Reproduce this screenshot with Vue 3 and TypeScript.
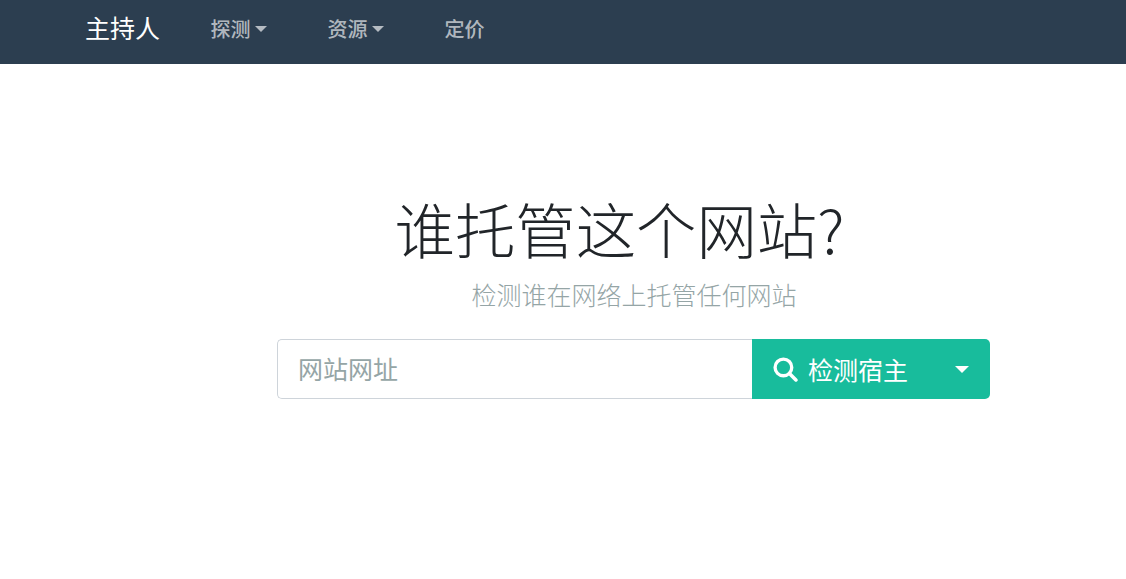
<script setup lang="ts">
const links = [
  { label: '探测', caret: true },
  { label: '资源', caret: true },
  { label: '定价', caret: false },
]
</script>

<template>
  <div class="page">
    <nav class="navbar">
      <a class="brand">主持人</a>
      <ul class="nav">
        <li v-for="l in links" :key="l.label" class="nav-item">
          <span>{{ l.label }}</span>
          <i v-if="l.caret" class="caret"></i>
        </li>
      </ul>
    </nav>
    <main class="hero">
      <h1 class="title">谁托管这个网站?</h1>
      <p class="lead">检测谁在网络上托管任何网站</p>
      <form class="search" @submit.prevent>
        <input class="input" type="text" placeholder="网站网址" />
        <button class="btn" type="submit">
          <svg class="icon" viewBox="0 0 24 24" width="25" height="25" aria-hidden="true">
            <circle cx="10" cy="10" r="8" fill="none" stroke="currentColor" stroke-width="3.2"/>
            <path d="M15.800 15.800L22 22" fill="none" stroke="currentColor" stroke-width="3.4" stroke-linecap="round"/>
          </svg>
          <span class="btn-label">检测宿主</span>
          <i class="caret caret-lg"></i>
        </button>
      </form>
    </main>
  </div>
</template>

<style>
html, body { margin: 0; background: #fff; }
</style>

<style scoped>
.page {
  height: 579px;
  overflow: hidden;
  font-family: Lato, "Noto Sans CJK SC", sans-serif;
}
.navbar {
  height: 64px;
  background: #2c3e50;
  display: flex;
  align-items: center;
  padding-left: 85px;
  padding-bottom: 7px;
  box-sizing: border-box;
}
.brand { color: #fff; font-size: 25px; line-height: 30px; margin-bottom: 1px; }
.nav { display: flex; list-style: none; margin: 0 0 0 50.5px; padding: 0; }
.nav-item {
  width: 117px;
  display: flex;
  align-items: center;
  color: rgba(255, 255, 255, 0.65);
  font-size: 20px;
  font-weight: 500;
  line-height: 30px;
}
.caret {
  display: inline-block;
  margin-left: 4px;
  border-top: 6px solid currentColor;
  border-left: 6px solid transparent;
  border-right: 6px solid transparent;
}
.hero {
  display: flex;
  flex-direction: column;
  align-items: center;
  padding-top: 125px;
  padding-left: 140px;
}
.title {
  margin: 0 27px 0 0;
  font-family: "Noto Sans CJK SC", sans-serif;
  font-size: 60.4px;
  font-weight: 300;
  line-height: 77px;
  color: #212529;
}
.lead { margin: 10px 0 0 2px; font-size: 25px; line-height: 38px; color: #95a5a6; font-weight: 300; }
.search { display: flex; width: 713px; height: 60px; margin-top: 25px; margin-left: 1px; }
.input {
  flex: 1;
  min-width: 0;
  box-sizing: border-box;
  border: 1px solid #ced4da;
  border-right: 0;
  border-radius: 5px 0 0 5px;
  padding: 0 20px;
  font: inherit;
  font-size: 25px;
  outline: none;
}
.input::placeholder { color: #95a5a6; opacity: 1; }
.btn {
  width: 238px;
  box-sizing: border-box;
  border: 0;
  border-radius: 0 5px 5px 0;
  background: #18bc9c;
  color: #fff;
  display: flex;
  align-items: center;
  padding: 0 21px;
  font: inherit;
  font-size: 25px;
}
.btn-label { margin-left: 10px; }
.caret-lg { margin-left: auto; border-top-width: 7px; border-left-width: 7px; border-right-width: 7px; }
</style>
